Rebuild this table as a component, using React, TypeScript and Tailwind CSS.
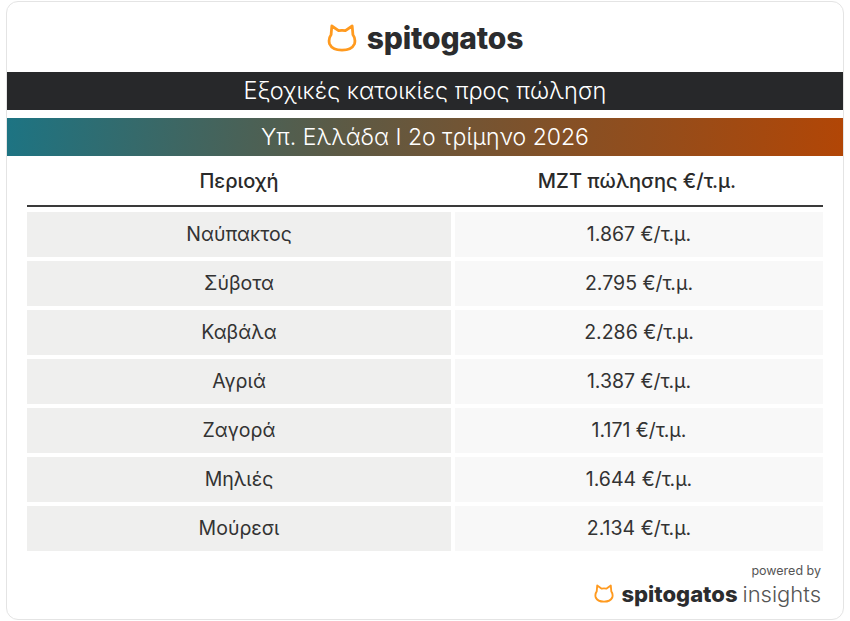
const rows = [
  { area: "Ναύπακτος", price: "1.867 €/τ.μ." },
  { area: "Σύβοτα", price: "2.795 €/τ.μ." },
  { area: "Καβάλα", price: "2.286 €/τ.μ." },
  { area: "Αγριά", price: "1.387 €/τ.μ." },
  { area: "Ζαγορά", price: "1.171 €/τ.μ." },
  { area: "Μηλιές", price: "1.644 €/τ.μ." },
  { area: "Μούρεσι", price: "2.134 €/τ.μ." },
];

function CatIcon({ className }: { className?: string }) {
  return (
    <svg viewBox="0 0 28 26" className={className} fill="none">
      <path
        d="M3.8 10 L4.5 1.8 L10.8 6.2 Q14 5.4 17.2 6.2 L23.5 1.8 L24.2 10 Q27 13.8 25.6 18.6 Q23 24.4 14 24.4 Q5 24.4 2.4 18.6 Q1 13.8 3.8 10 Z"
        stroke="#ff9a1f"
        strokeWidth="2.6"
        strokeLinejoin="round"
      />
    </svg>
  );
}

export default function App() {
  return (
    <div
      className="w-[850px] h-[621px] bg-white pl-[6px] pt-[1px]"
      style={{ fontFamily: "Inter, 'Noto Sans', sans-serif" }}
    >
      <div className="w-[838px] h-[619px] border border-[#e4e4e4] rounded-[12px] flex flex-col overflow-hidden">
        <div className="h-[70px] flex items-center justify-center gap-[10px] pt-[2px]">
          <CatIcon className="w-[30px] h-[28px]" />
          <span className="text-[30px] font-extrabold tracking-[-0.2px] text-[#2b2c2e] leading-none">
            spitogatos
          </span>
        </div>
        <div className="h-[38px] bg-[#27282a] flex items-center justify-center text-white text-[23.5px] font-light">
          Εξοχικές κατοικίες προς πώληση
        </div>
        <div className="h-[38px] mt-[8px] bg-[linear-gradient(95deg,#1d7483_0%,#5c5a45_40%,#8a4f22_70%,#b24606_100%)] flex items-center justify-center text-white text-[23px] font-light">
          Υπ. Ελλάδα I 2ο τρίμηνο 2026
        </div>
        <div className="px-[20px]">
          <div className="h-[51px] flex border-b-2 border-[#3a3a3a] text-[20px] font-medium text-[#2a2a2a]">
            <div className="w-[424px] flex items-center justify-center">Περιοχή</div>
            <div className="flex-1 flex items-center justify-center">ΜΖΤ πώλησης €/τ.μ.</div>
          </div>
          <div className="mt-[5px] flex flex-col gap-[4px] text-[19.5px] text-[#333]">
            {rows.map((r) => (
              <div key={r.area} className="h-[45px] flex gap-[4px]">
                <div className="w-[424px] bg-[#efefee] flex items-center justify-center">{r.area}</div>
                <div className="flex-1 bg-[#f8f8f8] flex items-center justify-center">{r.price}</div>
              </div>
            ))}
          </div>
        </div>
        <div className="mt-[14px] pr-[22px] flex flex-col items-end">
          <span className="text-[12.5px] text-[#555] leading-none">powered by</span>
          <div className="mt-[5px] flex items-center gap-[7px]">
            <CatIcon className="w-[20px] h-[19px]" />
            <span className="text-[22px] font-extrabold text-[#2b2c2e] leading-none">spitogatos</span>
            <span className="text-[22px] font-light text-[#555] leading-none -ml-[2px]">insights</span>
          </div>
        </div>
      </div>
    </div>
  );
}
